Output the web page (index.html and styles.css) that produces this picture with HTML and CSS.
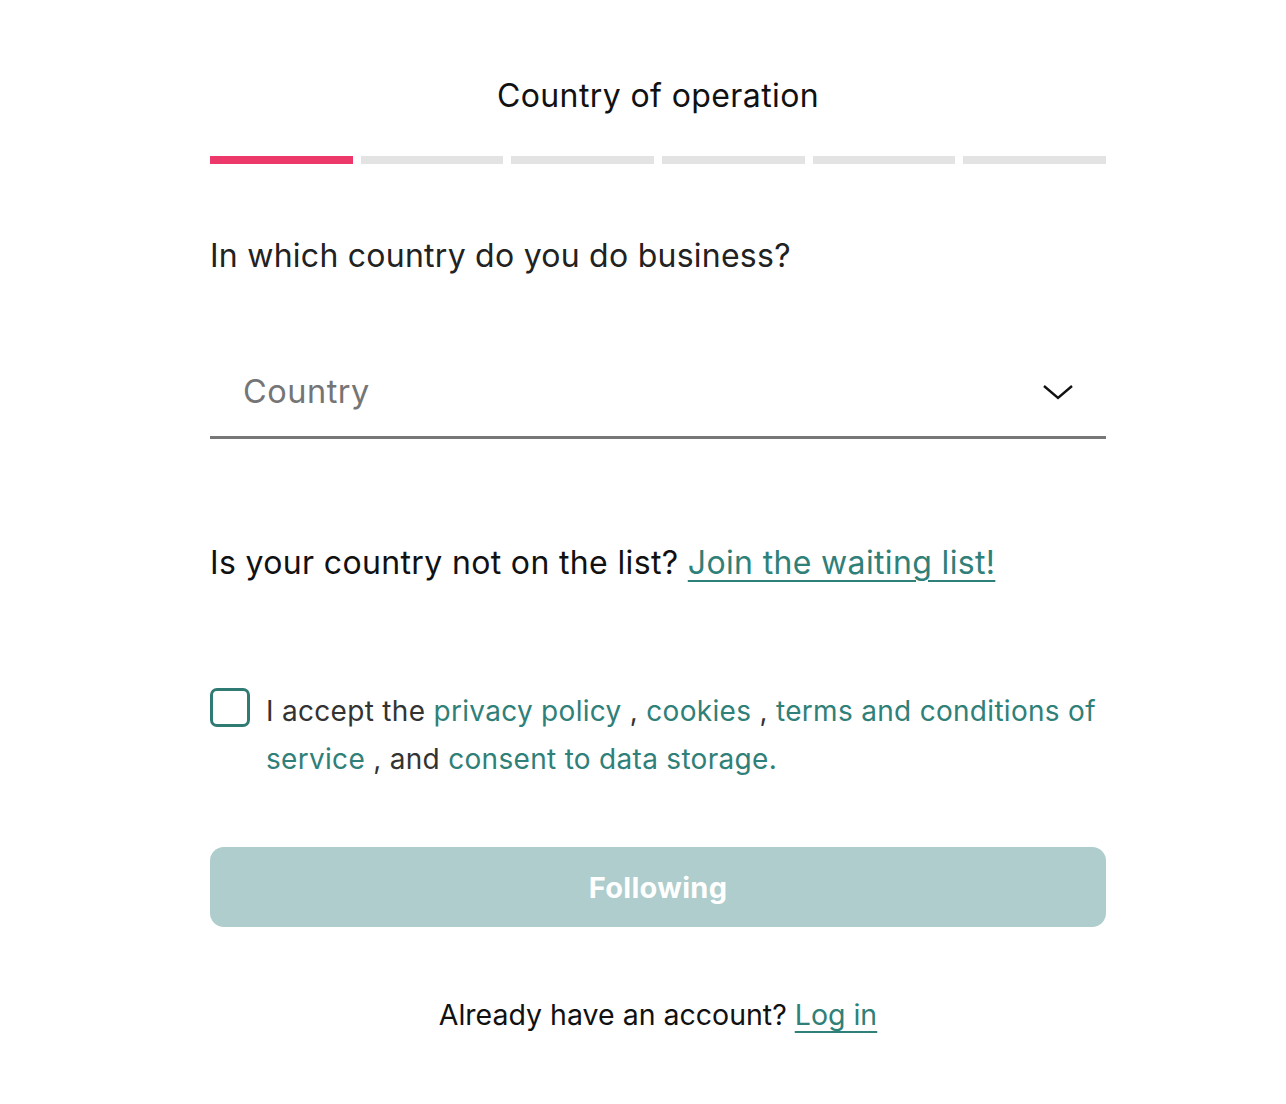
FILE: index.html
```html
<!DOCTYPE html>
<html>
<head>
<meta charset="utf-8">
<link rel="stylesheet" href="styles.css">
</head>
<body>
<div class="page">
  <h1 class="title">Country of operation</h1>
  <div class="progress">
    <span class="seg active"></span>
    <span class="seg"></span>
    <span class="seg"></span>
    <span class="seg"></span>
    <span class="seg"></span>
    <span class="seg"></span>
  </div>
  <p class="question">In which country do you do business?</p>
  <div class="select">
    <span class="placeholder">Country</span>
    <svg class="chev" width="32" height="18" viewBox="0 0 32 18"><path d="M2 3 L16 15 L30 3" fill="none" stroke="#111" stroke-width="2.4"/></svg>
  </div>
  <p class="notlisted">Is your country not on the list? <a href="#">Join the waiting list!</a></p>
  <div class="accept">
    <span class="box"></span>
    <p class="accept-text">I accept the <a>privacy policy</a> , <a>cookies</a> , <a>terms and conditions of service</a> , and <a>consent to data storage.</a></p>
  </div>
  <button class="btn">Following</button>
  <p class="login">Already have an account? <a href="#">Log in</a></p>
</div>
</body>
</html>
```
FILE: styles.css
```css
* { box-sizing: border-box; }
body { margin: 0; background: #fff; font-family: Inter, "Noto Sans", sans-serif; color: #111; }
.page { width: 896px; margin-left: 210px; padding-top: 74px; }
.title { margin: 0; text-align: center; font-weight: 400; font-size: 32px; line-height: 44px; color: #111; letter-spacing: 0.4px; }
.progress { display: flex; gap: 8px; margin-top: 38px; }
.seg { flex: 1; height: 8px; background: #e3e3e3; }
.seg.active { background: #ec386b; }
.question { margin: 71px 0 0; font-size: 32px; line-height: 42px; color: #222; letter-spacing: 0.25px; }
.select { margin-top: 87px; display: flex; align-items: center; justify-content: space-between; padding: 0 32px 0 33px; height: 75px; border-bottom: 3px solid #777; }
.placeholder { font-size: 32.5px; color: #757575; letter-spacing: 0.5px; padding-bottom: 18px; }
.chev { margin-bottom: 16px; }
.notlisted { margin: 103px 0 0; font-size: 32px; line-height: 42px; color: #111; letter-spacing: 0.35px; }
.notlisted a { color: #2f8078; text-decoration: underline; text-underline-offset: 6px; text-decoration-thickness: 2px; }
.accept { display: flex; gap: 16px; margin-top: 107px; align-items: flex-start; }
.box { flex: none; width: 40px; height: 39px; border: 3px solid #2f7b73; border-radius: 7px; margin-top: -3px; }
.accept-text { margin: 0; font-size: 28px; line-height: 48px; color: #333; margin-top: -4px; letter-spacing: 0.3px; }
.accept-text a { color: #2f8078; }
.btn { display: block; width: 100%; margin-top: 64px; height: 80px; border: none; border-radius: 14px; background: #aecdcc; color: #fff; font-family: inherit; font-weight: 700; font-size: 29px; letter-spacing: 0.3px; }
.login { margin: 68px 0 0; text-align: center; font-size: 28.5px; line-height: 40px; color: #111; }
.login a { color: #2f8078; text-decoration: underline; text-underline-offset: 6px; text-decoration-thickness: 2px; }
```
